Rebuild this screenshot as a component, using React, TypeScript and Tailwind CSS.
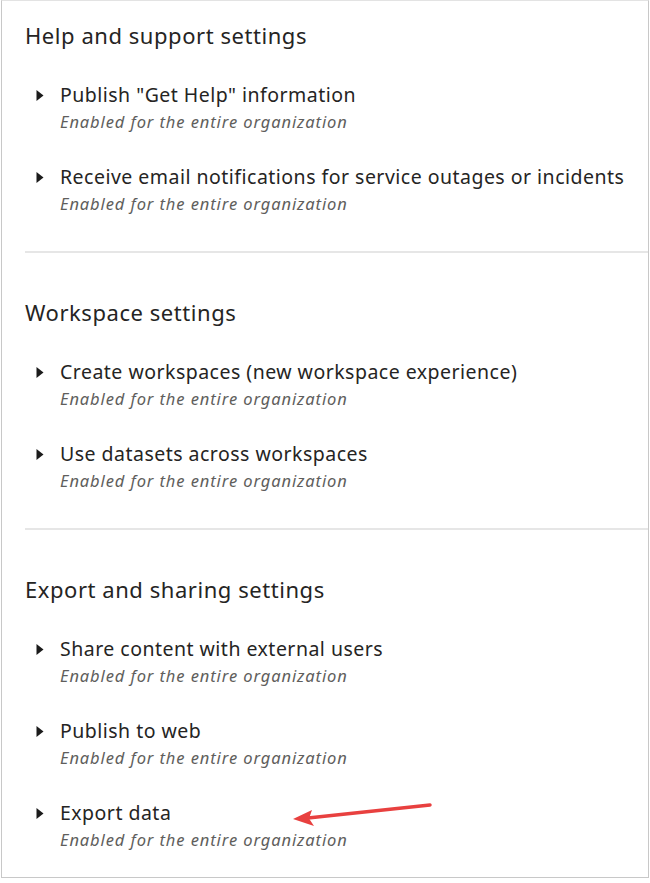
const sections = [
  {
    title: 'Help and support settings',
    items: ['Publish "Get Help" information', 'Receive email notifications for service outages or incidents'],
  },
  {
    title: 'Workspace settings',
    items: ['Create workspaces (new workspace experience)', 'Use datasets across workspaces'],
  },
  {
    title: 'Export and sharing settings',
    items: ['Share content with external users', 'Publish to web', 'Export data'],
  },
];

function Caret() {
  return (
    <svg width="8" height="11" viewBox="0 0 8 11" className="mt-[8px] shrink-0">
      <path d="M0.5 0 L7.5 5.5 L0.5 11 Z" fill="#1b1b1b" />
    </svg>
  );
}

function Setting({ label }: { label: string }) {
  return (
    <div className="flex gap-[16px] pl-[11px]">
      <Caret />
      <div>
        <div className="text-[19.5px] leading-[26px] tracking-[0.48px] text-[#252423]">{label}</div>
        <div className="text-[16.5px] leading-[28px] tracking-[0.9px] italic text-[#605e5c]">
          Enabled for the entire organization
        </div>
      </div>
    </div>
  );
}

export default function App() {
  return (
    <div className="h-[883px] w-[650px] bg-white" style={{ fontFamily: '"Noto Sans", sans-serif' }}>
      <div className="relative ml-[1px] h-[878px] w-[648px] border border-[#c8c8c8] border-t-[#e3e3e3]">
        {sections.map((s, i) => (
          <div key={s.title}>
            <div className={i === 0 ? 'pl-[23px] pt-[20px]' : 'pl-[23px] pt-[45px]'}>
              <div className="text-[22px] leading-[28px] tracking-[0.55px] text-[#252423]">{s.title}</div>
              <div className="mt-[33px] flex flex-col gap-[28px]">
                {s.items.map((it) => (
                  <Setting key={it} label={it} />
                ))}
              </div>
            </div>
            {i < sections.length - 1 && <div className="mt-[33px] ml-[23px] h-[2px] bg-[#e6e6e6]" />}
          </div>
        ))}
        <svg className="absolute left-[288px] top-[796px]" width="146" height="30" viewBox="0 0 146 30">
          <line x1="140" y1="8" x2="18" y2="21" stroke="#e8403f" strokeWidth="3.5" strokeLinecap="round" />
          <path d="M3 22 L22 13 L19 21.5 L24 29 Z" fill="#e8403f" />
        </svg>
      </div>
    </div>
  );
}
